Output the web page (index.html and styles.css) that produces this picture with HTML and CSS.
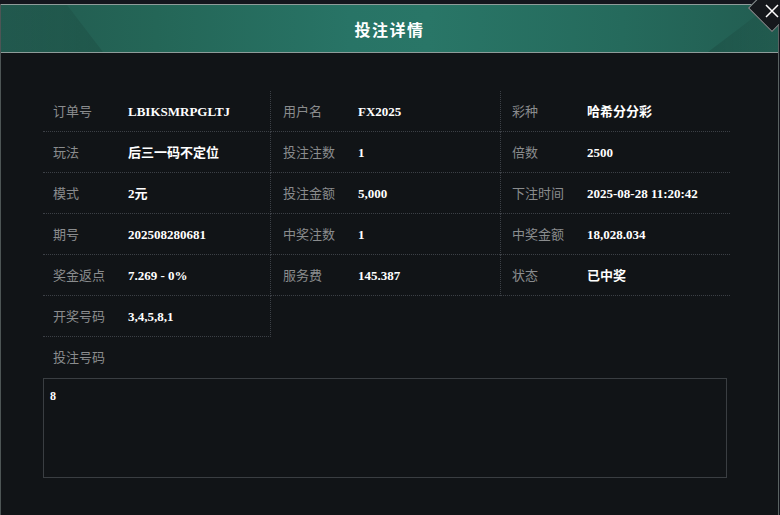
FILE: index.html
```html
<!DOCTYPE html>
<html lang="zh">
<head>
<meta charset="utf-8">
<title>投注详情</title>
<link rel="stylesheet" href="styles.css">
</head>
<body>
<div class="modal">
  <div class="header">
    <h1 class="title">投注详情</h1>
  </div>
  <button class="close" aria-label="关闭"><span class="close-x">
    <svg width="14" height="14" viewBox="0 0 14 14"><path d="M1 1 L13 13 M13 1 L1 13" stroke="#fff" stroke-width="1.5" fill="none"/></svg>
  </span></button>
  <div class="body">
    <div class="grid">
      <div class="cell c1"><span class="label">订单号</span><span class="value">LBIKSMRPGLTJ</span></div>
      <div class="cell c2"><span class="label">用户名</span><span class="value">FX2025</span></div>
      <div class="cell c3"><span class="label">彩种</span><span class="value">哈希分分彩</span></div>

      <div class="cell c1"><span class="label">玩法</span><span class="value">后三一码不定位</span></div>
      <div class="cell c2"><span class="label">投注注数</span><span class="value">1</span></div>
      <div class="cell c3"><span class="label">倍数</span><span class="value">2500</span></div>

      <div class="cell c1"><span class="label">模式</span><span class="value">2元</span></div>
      <div class="cell c2"><span class="label">投注金额</span><span class="value">5,000</span></div>
      <div class="cell c3"><span class="label">下注时间</span><span class="value">2025-08-28 11:20:42</span></div>

      <div class="cell c1"><span class="label">期号</span><span class="value">202508280681</span></div>
      <div class="cell c2"><span class="label">中奖注数</span><span class="value">1</span></div>
      <div class="cell c3"><span class="label">中奖金额</span><span class="value">18,028.034</span></div>

      <div class="cell c1"><span class="label">奖金返点</span><span class="value">7.269 - 0%</span></div>
      <div class="cell c2"><span class="label">服务费</span><span class="value">145.387</span></div>
      <div class="cell c3"><span class="label">状态</span><span class="value">已中奖</span></div>

      <div class="cell c1"><span class="label">开奖号码</span><span class="value">3,4,5,8,1</span></div>
    </div>
    <div class="numbers-label">投注号码</div>
    <div class="numbers-box">8</div>
  </div>
</div>
</body>
</html>
```

FILE: styles.css
```css
* { box-sizing: border-box; }
html, body { margin: 0; padding: 0; }
body {
  width: 780px;
  height: 515px;
  overflow: hidden;
  background: #14161d;
  font-family: "Noto Sans CJK SC", "Noto Sans", sans-serif;
}
.modal {
  position: relative;
  width: 779px;
  height: 515px;
  margin-top: 4px;
  background: #111417;
  border-left: 1px solid #4d5555;
  border-right: 1px solid #5a6262;
}
.header {
  position: relative;
  height: 49px;
  border-top: 1px solid #8e9c9a;
  border-bottom: 1px solid #8e9c9a;
  background: linear-gradient(to right, #225a4f 0%, #246657 20%, #287466 45%, #297667 55%, #256a5c 80%, #225d51 100%);
  display: flex;
  align-items: center;
  justify-content: center;
  overflow: hidden;
}
.header::before {
  content: "";
  position: absolute;
  left: 0; top: 0; bottom: 0;
  width: 102px;
  background: linear-gradient(to right, rgba(0,0,0,0.02), rgba(0,0,0,0.1));
  clip-path: polygon(0 0, 66px 0, 102px 100%, 0 100%);
}
.header::after {
  content: "";
  position: absolute;
  right: 0; top: 0; bottom: 0;
  width: 70px;
  background: linear-gradient(to left, rgba(0,0,0,0.03), rgba(0,0,0,0.12));
  clip-path: polygon(0 100%, 62px 0, 100% 0, 100% 100%);
}
.title {
  position: relative;
  z-index: 1;
  margin: 0;
  color: #ffffff;
  font-size: 16px;
  font-weight: 700;
  letter-spacing: 1.5px;
}
.close {
  position: absolute;
  top: -4px;
  right: -1px;
  width: 32px;
  height: 32px;
  padding: 0;
  border: none;
  background: transparent;
  cursor: pointer;
  overflow: hidden;
}
.close::before {
  content: "";
  position: absolute;
  left: 8px;
  top: -9px;
  width: 32px;
  height: 32px;
  background: #15181c;
  border: 1px solid #8c9494;
  transform: rotate(45deg);
}
.close-x {
  position: absolute;
  left: 18px;
  top: 4px;
  display: block;
  width: 14px;
  height: 14px;
}
.close-x svg { display: block; }
.body {
  padding: 38px 0 0 42px;
}
.grid {
  display: grid;
  grid-template-columns: 228px 229px 230px;
  width: 687px;
}
.cell {
  height: 41px;
  line-height: 37px;
  padding-left: 10px;
  border-bottom: 1px dotted #3c4046;
  white-space: nowrap;
}
.c1 { border-right: 1px dotted #3c4046; }
.c2 { padding-left: 12px; }
.c3 { border-left: 1px dotted #3c4046; padding-left: 11px; }
.label {
  display: inline-block;
  width: 75px;
  color: #8a8c8e;
  font-size: 13px;
  vertical-align: baseline;
}
.value {
  color: #ffffff;
  font-family: "Liberation Serif", "Noto Sans CJK SC", serif;
  font-weight: 700;
  font-size: 13px;
  vertical-align: baseline;
}
.numbers-label {
  margin: 11px 0 0 10px;
  height: 18px;
  line-height: 18px;
  color: #8a8c8e;
  font-size: 13px;
}
.numbers-box {
  margin-top: 12px;
  width: 684px;
  height: 100px;
  border: 1px solid #3a3e42;
  padding: 10px 6px;
  color: #ffffff;
  font-family: "Liberation Serif", serif;
  font-weight: 700;
  font-size: 12px;
}
```
